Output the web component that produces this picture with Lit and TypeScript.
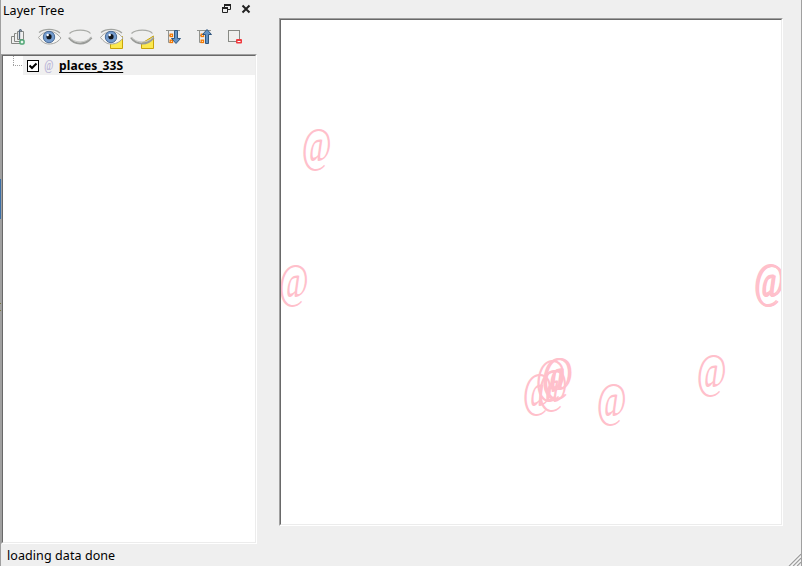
import { LitElement, html, css, svg } from "lit";
import { customElement } from "lit/decorators.js";

const EYE = svg`
  <path d="M4.5 12.5C8 8 12 6.500 16 6.500S23 8.500 27 13C23 18 19 19 15 19S8 17 4.500 12.500Z" fill="#f5f5f3" stroke="#a5a5a2" stroke-width="1"/>
  <path d="M5 7.500C10 3.500 20 3 26 8" fill="none" stroke="#a2a4a0" stroke-width="1.200"/>
  <circle cx="15" cy="12" r="5.700" fill="#749cce" stroke="#4b6d99" stroke-width="1"/>
  <circle cx="15" cy="11.700" r="2.600" fill="#10151b"/>
  <circle cx="13.700" cy="10" r="1.200" fill="#fff"/>`;
const LID = svg`
  <path d="M4.500 8.500C9 4 22 4 25.500 8.500" fill="none" stroke="#a8aaa6" stroke-width="1.200"/>
  <path d="M4 12.500C9.500 20.500 20.500 20.500 26.500 12.500" fill="none" stroke="#999b98" stroke-width="2.200"/>
  <path d="M4 12C9.500 18.500 20.500 18.500 26.500 12" fill="none" stroke="#c5c6c3" stroke-width="1"/>`;
const NOTE = svg`<path d="M14.500 23.500V18.500L26.500 11V23.500Z" fill="#fce94f" stroke="#c9a40a"/>`;
const BRANCH = svg`
  <path d="M8 5.500H22M10.500 5.500V17.500H12M10.500 10.500H12" fill="none" stroke="#91938f" stroke-width="1"/>
  <rect x="12.200" y="9.200" width="2.300" height="2.300" fill="#fff" stroke="#f57900" stroke-width="1.300"/>
  <rect x="12.200" y="15.200" width="2.300" height="2.300" fill="#fff" stroke="#f57900" stroke-width="1.300"/>`;

const TOOLS = [
  svg`<path d="M11 11.500H8.500V18.500H17M13.500 8.500H11.500V16.500H18M14.500 6.500H20.500V14.500H14.500Z" fill="none" stroke="#858783" stroke-width="1"/>
    <path d="M16.500 14V5.500Q18 3.500 18.500 6.500" fill="none" stroke="#53677d" stroke-width="1.300"/>
    <rect x="17" y="15" width="4" height="4" rx="1" fill="#e9f7ee" stroke="#4fa574" stroke-width="1.500"/>`,
  EYE,
  LID,
  svg`<path d="M14.500 11.500H26.500V23.500H14.500Z" fill="#fce94f" stroke="#c9a40a"/>${EYE}`,
  svg`${NOTE}${LID}`,
  svg`${BRANCH}<path d="M16.500 5.500H19.500V13.500H22.500L18 18.500L13.500 13.500H16.500Z" fill="#6393c5" stroke="#30577f"/>`,
  svg`${BRANCH}<path d="M16.500 18.500H19.500V9.500H22.500L18 4.500L13.500 9.500H16.500Z" fill="#6393c5" stroke="#30577f"/>`,
  svg`<rect x="8.500" y="5.500" width="11" height="11" fill="#f0f0ee" stroke="#888a85"/>
    <rect x="16" y="14" width="6" height="4.500" rx="1" fill="#ef3b3f"/><path d="M17.500 16.500H20.500" stroke="#fff"/>`,
];

// Marker centres in map canvas coordinates.
const PLACES = [
  [36, 129.5], [13, 265.5],
  [488, 265], [489, 265.5], [489.500, 266],
  [257, 375], [272, 371], [270, 361], [276, 359], [277.500, 358.5],
  [431, 355.5], [331, 385],
];

@customElement("app-root")
export class AppRoot extends LitElement {
  static styles = css`
    :host { display: block; }
    * { box-sizing: border-box; }
    .window {
      width: 802px; height: 566px; display: flex; background: #efefef; color: #000;
      overflow: hidden; font: 12.500px/18px "Noto Sans", "Open Sans", sans-serif; position: relative;
    }
    .edge { width: 1px; background: #a0a0a0; display: flex; flex-direction: column; }
    .edge i { height: 40px; margin-top: 179px; background: #3a6ea5; }
    .edge b { height: 8px; margin-top: 84px; border: solid #77763f; border-width: 1px 0; }
    .main { flex: 1; display: flex; flex-direction: column; }
    .content { height: 544px; display: flex; }
    .dock { width: 256px; display: flex; flex-direction: column; padding-left: 1px; }
    .title { height: 23px; display: flex; padding: 2px 4px 0 1px; }
    .title span { flex: 1; letter-spacing: 0.05px; }
    .title svg { margin-top: 1px; }
    .tools { height: 31px; padding: 2px 0 0 1px; display: flex; }
    .tools svg { flex: none; }
    .tree {
      height: 490px; background: #fff; border: 1px solid;
      border-color: #a0a0a0 #fff #fff #a0a0a0; margin-left: -1px;
    }
    .inner { height: 100%; border: 1px solid; border-color: #696969 #ececec #ececec #696969; }
    .row { height: 19px; display: flex; align-items: center; }
    .row .twig { width: 20px; height: 19px; flex: none; }
    .cell { flex: 1; height: 19px; display: flex; align-items: center; background: #f0f0f0; }
    .check { margin-left: 4px; flex: none; }
    .sym { margin-left: 5px; width: 10px; flex: none; }
    .name {
      margin-left: 5px; font-weight: 700; font-size: 12px; letter-spacing: 0.12px;
      text-decoration: underline 1px; text-underline-offset: 2px; text-decoration-skip-ink: none;
    }
    .map { margin: 18px 0 0 22px; width: 504px; height: 508px; border: 1px solid; border-color: #a0a0a0 #fff #fff #a0a0a0; background: #fff; }
    .map svg { display: block; }
    .mark { font-family: "Liberation Serif", serif; fill: #ffc0cb; font-size: 48.500px; }
    .tiny { font-family: "Liberation Serif", serif; fill: #b7b2d6; stroke: #b7b2d6; stroke-width: .2px; font-size: 15px; }
    .status { flex: 1; padding: 2px 0 0 6px; display: flex; justify-content: space-between; align-items: flex-end; }
    .status span { height: 19px; line-height: 18px; letter-spacing: 0.08px; }
    .right { width: 1px; background: #a0a0a0; }
  `;

  render() {
    return html`<div class="window">
      <div class="edge"><i></i><b></b></div>
      <div class="main">
        <div class="content">
          <div class="dock">
            <div class="title">
              <span>Layer Tree</span>
              <svg width="32" height="14" viewBox="0 0 32 14" fill="none" stroke="#222">
                <path d="M3.500 4V1.500H9.500V6.500H7" /><path d="M3 2H10" stroke-width="2"/>
                <path d="M1.500 5.500H6.500V9.500H1.500Z"/><path d="M1 5H7" stroke-width="2"/>
                <path d="M21.500 2.500L28.500 9.500M28.500 2.500L21.500 9.500" stroke-width="2"/>
              </svg>
            </div>
            <div class="tools">
              ${TOOLS.map((t) => html`<svg width="31" height="26" viewBox="0 0 31 26">${t}</svg>`)}
            </div>
            <div class="tree"><div class="inner"><div class="row">
              <svg class="twig" viewBox="0 0 20 19"><path d="M10.500 0V9.500M10 9.500H20" fill="none" stroke="#a0a0a0" stroke-dasharray="1 1"/></svg>
              <div class="cell">
                <svg class="check" width="12" height="12" viewBox="0 0 12 12"><rect x=".5" y=".5" width="11" height="11" fill="#fff" stroke="#000"/><path d="M2.500 5.500L5 8L9.500 3.500" fill="none" stroke="#000" stroke-width="2"/></svg>
                <svg class="sym" width="10" height="16" viewBox="0 0 10 16"><text class="tiny" transform="translate(.3 12) scale(.66 1)">@</text></svg>
                <span class="name">places_33S</span>
              </div>
            </div></div></div>
          </div>
          <div class="map"><div class="inner">
            <svg width="500" height="504" viewBox="0 0 500 504">
              ${PLACES.map(([x, y]) => svg`<text class="mark" transform=${`translate(${x - 15.2} ${y + 11.2}) scale(.67 1)`}>@</text>`)}
            </svg>
          </div></div>
        </div>
        <div class="status">
          <span>loading data done</span>
          <svg width="13" height="13" viewBox="0 0 13 13" stroke="#a0a0a0" stroke-width="1.400"><path d="M1 13L13 1M5 13L13 5M9 13L13 9"/><path d="M0 12.500L12.500 0M3.500 13L13 3.500M7.500 13L13 7.500" stroke="#fff" stroke-width=".8"/></svg>
        </div>
      </div>
      <div class="right"></div>
    </div>`;
  }
}
